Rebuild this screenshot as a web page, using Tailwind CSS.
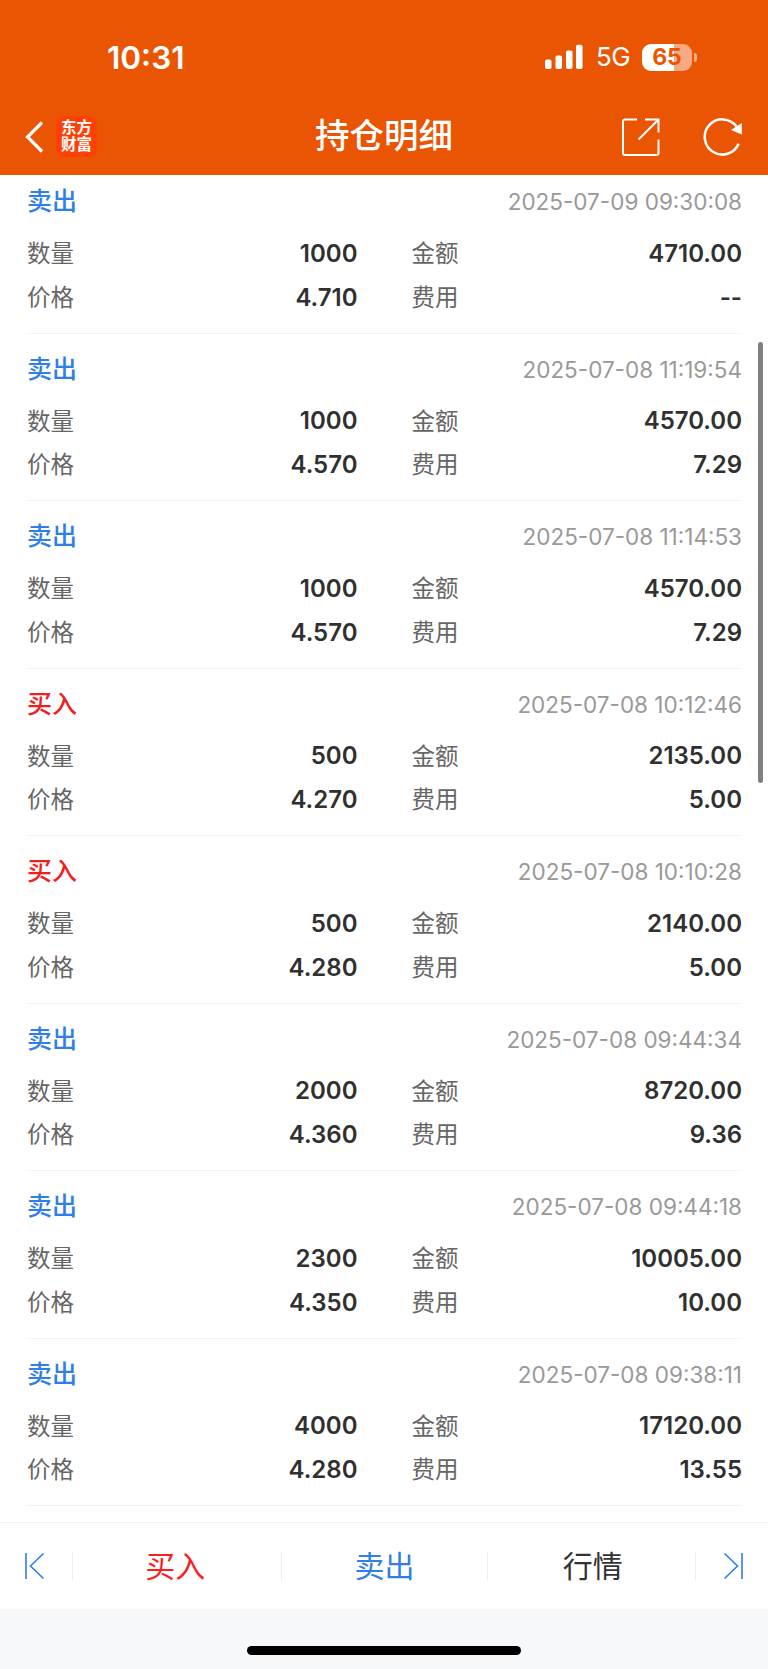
<!DOCTYPE html>
<html lang="zh-CN">
<head>
  <meta charset="UTF-8" />
  <title>持仓明细</title>
  <meta name="viewport" content="width=device-width, initial-scale=1" />
  <script src="https://cdn.jsdelivr.net/npm/@tailwindcss/browser@4"></script>
</head>
<body class="bg-white font-['Inter','Noto_Sans_CJK_SC',sans-serif] antialiased">
  <div class="relative flex h-[1669px] w-[768px] flex-col overflow-hidden">

    <!-- Header -->
    <header class="h-[175px] shrink-0 bg-[#ea5504] text-white">
      <div class="flex h-[98px] items-start justify-between pl-[107px] pr-[71px] pt-[38px]">
        <div class="text-[31.5px] leading-[39px] font-semibold">10:31</div>
        <div class="flex h-[38px] items-center">
          <svg class="h-[26px] w-[40px]" viewBox="0 0 40 26" fill="currentColor">
            <rect x="1" y="15.500" width="6.500" height="9.500" rx="1.800" />
            <rect x="11.500" y="11.500" width="6.500" height="13.500" rx="1.800" />
            <rect x="22" y="6.500" width="6.500" height="18.500" rx="1.800" />
            <rect x="32" y="0.800" width="6.500" height="24.200" rx="1.800" />
          </svg>
          <span class="ml-3 text-[26px] leading-[40px] tracking-[-0.6px]">5G</span>
          <div class="ml-3 flex items-center">
            <div class="flex h-[27px] w-[50px] items-center justify-center rounded-[9px] bg-linear-to-r from-white from-65% to-white/50 to-65% text-[23px] leading-none font-bold text-[#ea5504]">65</div>
            <div class="ml-0.5 h-[9px] w-[3px] rounded-r-full bg-white/50"></div>
          </div>
        </div>
      </div>
      <div class="grid h-[77px] grid-cols-[1fr_auto_1fr] items-center pl-[25px] pr-[25px]">
        <div class="flex items-center gap-[12px]">
          <svg class="h-[32px] w-[19px]" viewBox="0 0 19 32" fill="none" stroke="currentColor" stroke-width="3.200">
            <path d="M17 1.500 2.500 16 17 30.500" />
          </svg>
          <div class="flex h-[41px] w-[41px] flex-col items-center justify-center rounded-lg bg-[#ff4006] pb-0.5 text-[15.5px] leading-[17px] font-bold">
            <span>东方</span><span>财富</span>
          </div>
        </div>
        <h1 class="pb-0.5 text-[34.5px] leading-[50px] font-medium">持仓明细</h1>
        <div class="flex items-center justify-end gap-[42px]">
          <svg class="h-[40px] w-[40px]" viewBox="0 0 40 40" fill="none" stroke="currentColor" stroke-width="2">
            <path d="M16 2.500H4a2 2 0 0 0-2 2V36a2 2 0 0 0 2 2H35.500a2 2 0 0 0 2-2V22.500" />
            <path d="M24 2.500H37.500V15.500M37 3 17.500 22.500" />
          </svg>
          <svg class="h-[40px] w-[40px]" viewBox="0 0 40 40" fill="none" stroke="currentColor" stroke-width="2.500">
            <path d="M35.600 26.700A17.600 17.600 0 1 1 33.500 9.500" />
            <path d="M38.800 6V17.500L28 13Z" fill="currentColor" stroke="none" />
          </svg>
        </div>
      </div>
    </header>

    <!-- Trade list -->
    <main class="min-h-0 flex-1 overflow-hidden px-[26px]">
      <div id="tradeList" class="-mt-[9px]"></div>
    </main>

    <!-- Scroll indicator -->
    <div class="absolute top-[342px] right-[5px] h-[441px] w-[5.5px] rounded-full bg-[#808080]"></div>

    <!-- Bottom bar -->
    <nav class="flex h-[87px] shrink-0 items-center border-t border-[#f2f3f5] text-[30px]">
      <div class="flex w-[72px] justify-center pr-[3px] text-[#2f7fe6]">
        <svg class="h-[28px] w-[21px]" viewBox="0 0 21 28" fill="none" stroke="currentColor" stroke-width="1.600">
          <path d="M2 1V27M19.500 1.500 6.500 14 19.500 26.500" />
        </svg>
      </div>
      <div class="flex h-[29px] flex-1 items-center justify-center border-l border-[#eceef0] pr-1 text-[#fa1e1e]">买入</div>
      <div class="flex h-[29px] flex-1 items-center justify-center border-l border-[#eceef0] text-[#2f7fe6]">卖出</div>
      <div class="flex h-[29px] flex-1 items-center justify-center border-x border-[#eceef0] pl-[3px] text-[#333]">行情</div>
      <div class="flex w-[72px] justify-center pl-[3px] text-[#2f7fe6]">
        <svg class="h-[28px] w-[21px]" viewBox="0 0 21 28" fill="none" stroke="currentColor" stroke-width="1.600">
          <path d="M19 1V27M1.500 1.500 14.500 14 1.500 26.500" />
        </svg>
      </div>
    </nav>
    <div class="flex h-[60px] shrink-0 justify-center bg-[#f6f8fa] pt-[37px]">
      <div class="h-[9px] w-[274px] rounded-full bg-black"></div>
    </div>
  </div>

  <script>
    const trades = [
      { side: "sell", time: "2025-07-09 09:30:08", qty: "1000", amount: "4710.00", price: "4.710", fee: "--" },
      { side: "sell", time: "2025-07-08 11:19:54", qty: "1000", amount: "4570.00", price: "4.570", fee: "7.29" },
      { side: "sell", time: "2025-07-08 11:14:53", qty: "1000", amount: "4570.00", price: "4.570", fee: "7.29" },
      { side: "buy", time: "2025-07-08 10:12:46", qty: "500", amount: "2135.00", price: "4.270", fee: "5.00" },
      { side: "buy", time: "2025-07-08 10:10:28", qty: "500", amount: "2140.00", price: "4.280", fee: "5.00" },
      { side: "sell", time: "2025-07-08 09:44:34", qty: "2000", amount: "8720.00", price: "4.360", fee: "9.36" },
      { side: "sell", time: "2025-07-08 09:44:18", qty: "2300", amount: "10005.00", price: "4.350", fee: "10.00" },
      { side: "sell", time: "2025-07-08 09:38:11", qty: "4000", amount: "17120.00", price: "4.280", fee: "13.55" }
    ];

    const sides = {
      sell: { label: "卖出", color: "text-[#2f7fe6]" },
      buy: { label: "买入", color: "text-[#f02020]" }
    };

    const cell = (label, value) => `
      <div class="flex items-center justify-between">
        <span class="text-[23.5px] text-[#666]">${label}</span>
        <span class="text-[24px] font-semibold text-[#303030]">${value}</span>
      </div>`;

    document.getElementById("tradeList").innerHTML = trades.map(t => `
      <section class="h-[167.5px] border-b border-[#f2f3f5] pl-px pt-[18px]">
        <div class="flex h-[36px] items-center justify-between">
          <span class="text-[25px] font-medium ${sides[t.side].color}">${sides[t.side].label}</span>
          <span class="text-[22.5px] text-[#999]">${t.time}</span>
        </div>
        <div class="mt-3 grid auto-rows-[43.7px] grid-cols-2 gap-x-[54px]">
          ${cell("数量", t.qty)}
          ${cell("金额", t.amount)}
          ${cell("价格", t.price)}
          ${cell("费用", t.fee)}
        </div>
      </section>`).join("");
  </script>
</body>
</html>
